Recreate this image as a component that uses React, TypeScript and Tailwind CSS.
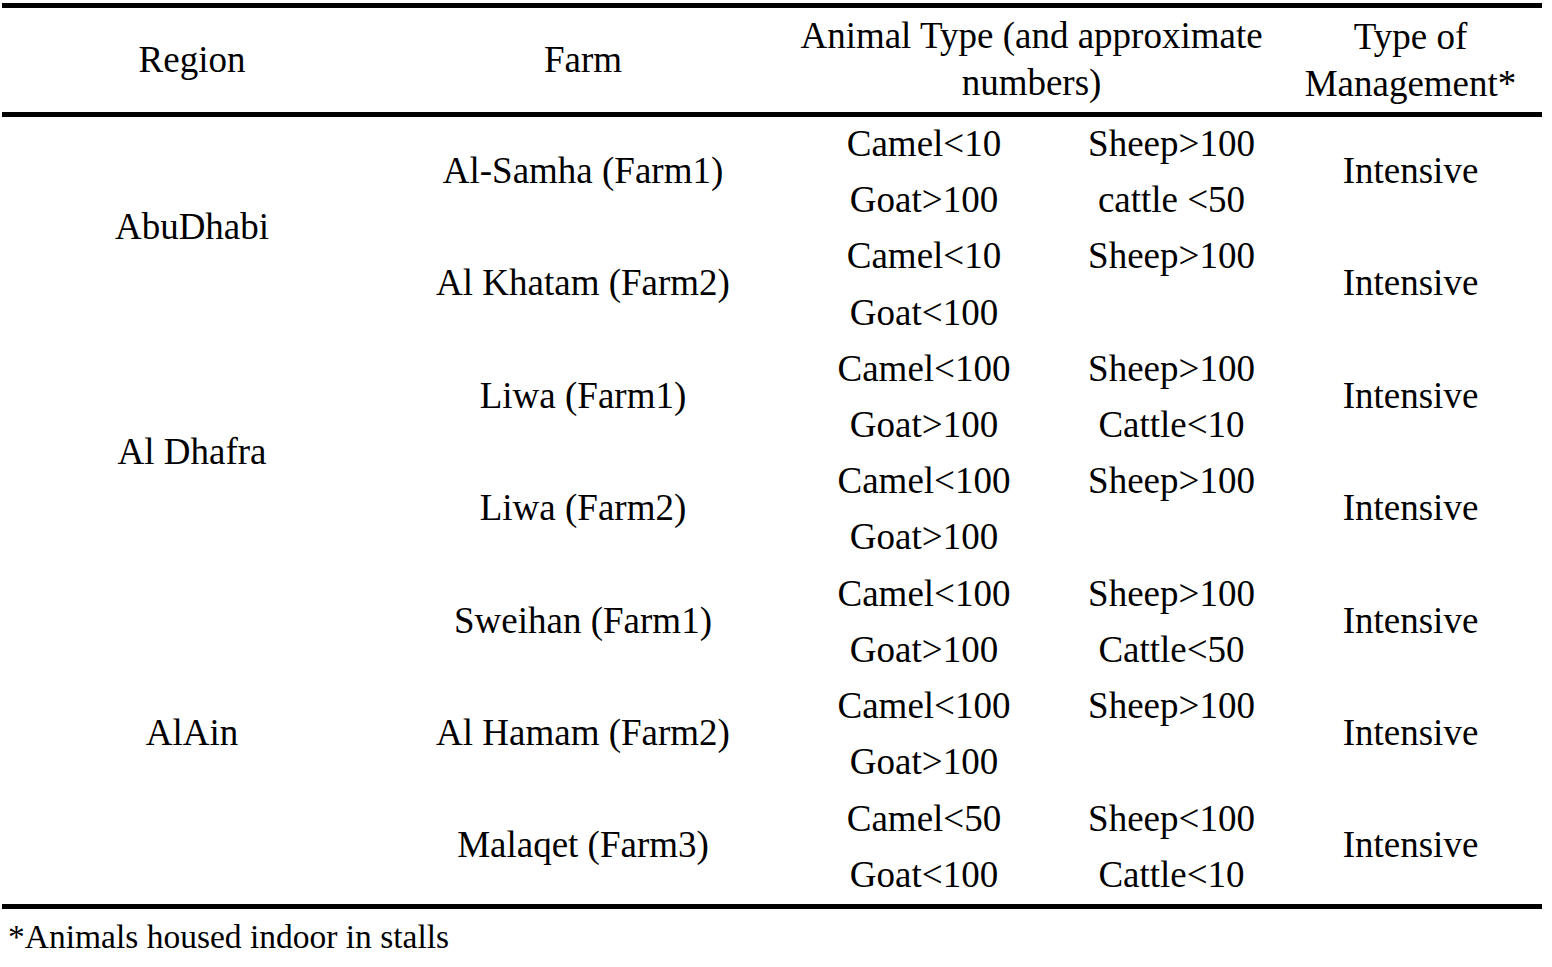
import React from "react";

type Row = { farm: string; a: [string, string]; b: [string, string] };

const rows: Row[] = [
  { farm: "Al-Samha (Farm1)", a: ["Camel<10", "Goat>100"], b: ["Sheep>100", "cattle <50"] },
  { farm: "Al Khatam (Farm2)", a: ["Camel<10", "Goat<100"], b: ["Sheep>100", ""] },
  { farm: "Liwa (Farm1)", a: ["Camel<100", "Goat>100"], b: ["Sheep>100", "Cattle<10"] },
  { farm: "Liwa (Farm2)", a: ["Camel<100", "Goat>100"], b: ["Sheep>100", ""] },
  { farm: "Sweihan (Farm1)", a: ["Camel<100", "Goat>100"], b: ["Sheep>100", "Cattle<50"] },
  { farm: "Al Hamam (Farm2)", a: ["Camel<100", "Goat>100"], b: ["Sheep>100", ""] },
  { farm: "Malaqet (Farm3)", a: ["Camel<50", "Goat<100"], b: ["Sheep<100", "Cattle<10"] },
];

const regions = [
  { name: "AbuDhabi", span: "row-span-2", start: "row-start-1" },
  { name: "Al Dhafra", span: "row-span-2", start: "row-start-3" },
  { name: "AlAin", span: "row-span-3", start: "row-start-5" },
];

function TwoLines({ lines }: { lines: [string, string] }) {
  return (
    <div className="flex flex-col">
      {lines.map((l, i) => (
        <div key={i} className="h-[56.2px] leading-[56.2px] text-center whitespace-pre">
          {l || "\u00a0"}
        </div>
      ))}
    </div>
  );
}

export default function App() {
  return (
    <div className="min-h-[967px] w-[1552px] bg-white text-black font-['Liberation_Serif',_'Times_New_Roman',_serif]">
      <div className="ml-[2px] w-[1540px] pt-[3px]">
        <div className="h-[5px] bg-black" />
        <div className="grid h-[104px] grid-cols-[380px_402px_495px_263px] items-center text-[37px] leading-[47px] text-center">
          <div className="pb-[2px]">Region</div>
          <div className="pb-[2px]">Farm</div>
          <div className="pb-[2px]">
            Animal Type (and approximate
            <br />
            numbers)
          </div>
          <div>
            Type of
            <br />
            Management*
          </div>
        </div>
        <div className="h-[5px] bg-black" />
        <div className="grid grid-cols-[380px_402px_280px_215px_263px] grid-rows-[repeat(7,112.43px)] text-[37px]">
          {regions.map((r) => (
            <div key={r.name} className={`col-start-1 ${r.start} ${r.span} flex items-center justify-center pb-[5px]`}>
              {r.name}
            </div>
          ))}
          {rows.map((row, i) => (
            <React.Fragment key={i}>
              <div className="col-start-2 flex items-center justify-center pb-[5px]">{row.farm}</div>
              <div className="col-start-3 flex items-center justify-center pb-[2px]">
                <TwoLines lines={row.a} />
              </div>
              <div className="col-start-4 flex items-center justify-center pb-[2px]">
                <TwoLines lines={row.b} />
              </div>
              <div className="col-start-5 flex items-center justify-center pb-[5px]">Intensive</div>
            </React.Fragment>
          ))}
        </div>
        <div className="h-[5px] bg-black" />
        <div className="pl-[6px] text-[33.5px] leading-[56px]">*Animals housed indoor in stalls</div>
      </div>
    </div>
  );
}
